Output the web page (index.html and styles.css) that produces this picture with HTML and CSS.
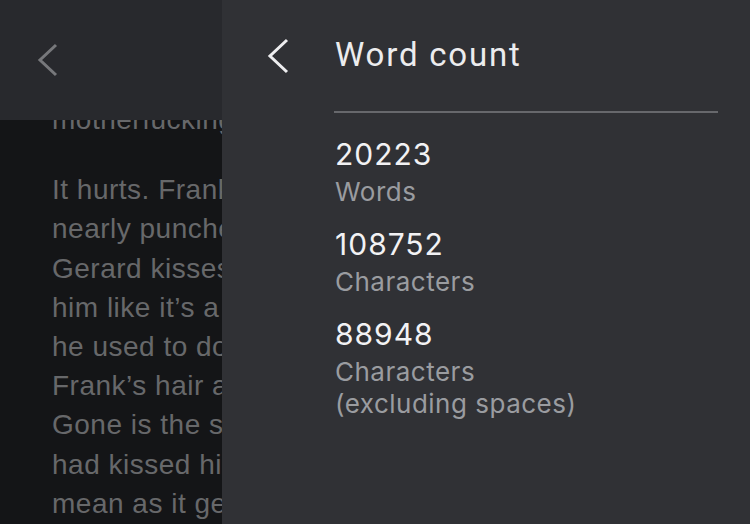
FILE: index.html
```html
<!DOCTYPE html>
<html lang="en">
<head>
    <meta charset="UTF-8">
    <meta name="viewport" content="width=device-width, initial-scale=1.0">
    <title>Word count</title>
    <link rel="stylesheet" href="styles.css">
</head>
<body>

    <div class="doc-side">
        <div class="doc-toolbar">
            <svg class="doc-back" width="24" height="36" viewBox="0 0 24 36">
                <polyline points="20,3 4,18 20,33" fill="none" stroke="currentColor" stroke-width="3"/>
            </svg>
        </div>
        <div class="doc-body">
            <p class="doc-para">motherfucking.</p>
            <p class="doc-para">It hurts. Frank<br>nearly punches<br>Gerard kisses<br>him like it’s a<br>he used to do<br>Frank’s hair a<br>Gone is the s<br>had kissed hi<br>mean as it ge</p>
        </div>
    </div>

    <div class="count-panel">
        <div class="panel-back">
            <svg width="24" height="36" viewBox="0 0 24 36">
                <polyline points="21,2 4,18 21,34" fill="none" stroke="currentColor" stroke-width="3"/>
            </svg>
        </div>
        <div class="panel-main">
            <h1 class="panel-title">Word count</h1>
            <hr class="panel-divider">

            <div class="stat">
                <div class="stat-value">20223</div>
                <div class="stat-label">Words</div>
            </div>
            <div class="stat">
                <div class="stat-value">108752</div>
                <div class="stat-label">Characters</div>
            </div>
            <div class="stat">
                <div class="stat-value">88948</div>
                <div class="stat-label">Characters<br>(excluding spaces)</div>
            </div>
        </div>
    </div>

</body>
</html>
```

FILE: styles.css
```css
body {
    margin: 0;
    width: 750px;
    height: 524px;
    overflow: hidden;
    display: flex;
    background-color: #141517;
    font-family: "Liberation Sans", Arial, sans-serif;
}

/* Document behind the panel */
.doc-side {
    width: 222px;
    flex-shrink: 0;
    display: flex;
    flex-direction: column;
    overflow: hidden;
}
.doc-toolbar {
    height: 120px;
    flex-shrink: 0;
    background-color: #28292d;
    color: #77787b;
    padding-left: 36px;
    padding-top: 42px;
    box-sizing: border-box;
}
.doc-back {
    display: block;
}
.doc-body {
    flex: 1;
    overflow: hidden;
    padding-left: 52px;
    color: #67686a;
    font-size: 28px;
    line-height: 39.2px;
    letter-spacing: 0.5px;
    white-space: nowrap;
}
.doc-para {
    margin: 0 0 31px;
}
.doc-para:first-child {
    margin-top: -20px;
}

/* Word count panel */
.count-panel {
    flex: 1;
    background-color: #303135;
    display: flex;
    color: #eeeef0;
}
.panel-back {
    width: 113px;
    flex-shrink: 0;
    padding-left: 44px;
    padding-top: 38px;
    box-sizing: border-box;
}
.panel-back svg {
    display: block;
}
.panel-main {
    flex: 1;
    padding-right: 32px;
}
.panel-title {
    margin: 0;
    padding-top: 33px;
    font-family: Roboto, "Open Sans", sans-serif;
    font-weight: 400;
    font-size: 33px;
    letter-spacing: 1.8px;
    line-height: 44px;
    color: #ececee;
}
.panel-divider {
    margin: 34px 0 0 -1px;
    border: none;
    height: 2px;
    background-color: #67686c;
}
.stat {
    margin-top: 18px;
    font-family: Inter, "Noto Sans", sans-serif;
}
.stat:first-of-type {
    margin-top: 23px;
}
.stat-value {
    font-size: 30px;
    line-height: 36px;
    letter-spacing: 1px;
    color: #f2f2f4;
}
.stat-label {
    padding-top: 4px;
    font-size: 26px;
    line-height: 32px;
    letter-spacing: 0.5px;
    color: #9a9ca0;
}
```
